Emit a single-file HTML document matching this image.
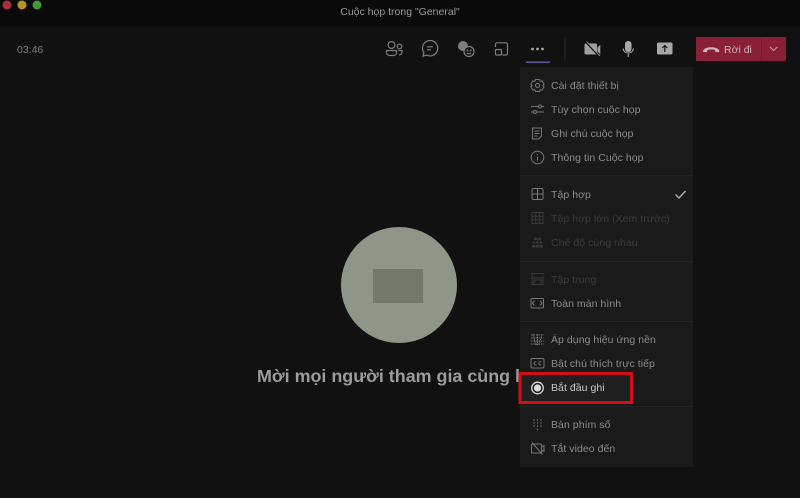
<!DOCTYPE html>
<html><head><meta charset="utf-8">
<style>
html,body{margin:0;padding:0;background:#111112;}
#r{position:relative;width:800px;height:498px;overflow:hidden;background:#111112;font-family:"Liberation Sans","Noto Sans CJK JP",sans-serif;filter:blur(.3px);}
.t{position:absolute;white-space:nowrap;}
.i{position:absolute;white-space:nowrap;left:551px;font-size:10.5px;line-height:14px;color:#8c8c8c;letter-spacing:.05px;}
.d{color:#3c3c3c;}
.s{position:absolute;left:520px;width:173px;height:1px;background:#242424;}
svg{position:absolute;left:0;top:0;}
</style></head><body>
<div id="r">
<div style="position:absolute;left:0;top:0;width:800px;height:26px;background:#0a0a0a;"></div>
<div class="t" style="left:0;width:800px;top:5px;text-align:center;font-size:10.5px;line-height:14px;color:#9a9a9a;">Cuộc họp trong "General"</div>
<div class="t" style="left:17px;top:43px;font-size:10.5px;line-height:14px;color:#7d7d7d;">03:46</div>

<div style="position:absolute;left:341px;top:227px;width:116px;height:116px;border-radius:50%;background:#8f9587;"></div>
<div style="position:absolute;left:373px;top:269px;width:50px;height:34px;background:#74796c;"></div>
<div class="t" style="left:257px;top:364px;font-size:17.9px;line-height:24px;font-weight:bold;color:#9c9c9c;">Mời mọi người tham gia cùng bạn</div>

<div style="position:absolute;left:520px;top:67px;width:173px;height:400px;background:#1a1a1a;"></div>
<div style="position:absolute;left:520px;top:374px;width:111px;height:28px;background:#202020;"></div>
<div class="s" style="top:175px"></div>
<div class="s" style="top:261px"></div>
<div class="s" style="top:321px"></div>
<div class="s" style="top:406px"></div>

<div style="position:absolute;left:696px;top:37px;width:90px;height:24px;background:#8a1f38;border-radius:1px;"></div>
<div style="position:absolute;left:761px;top:37px;width:1px;height:24px;background:#701a2e;"></div>
<div class="t" style="left:724px;top:43px;font-size:10.5px;line-height:14px;color:#c9b5ba;">Rời đi</div>

<svg width="800" height="498" viewBox="0 0 800 498" fill="none">
<circle cx="7" cy="5" r="4.5" fill="#a8323a"/><circle cx="22" cy="5" r="4.5" fill="#b8902c"/><circle cx="37" cy="5" r="4.5" fill="#3f9a3c"/>

<g stroke="#7e7e7e" stroke-width="1.2">
<!-- people -->
<circle cx="391.500" cy="45" r="3.400"/><circle cx="399.500" cy="46.500" r="2.300"/>
<path d="M386.500 50.500h10v2a3 3 0 0 1-3 3h-4a3 3 0 0 1-3-3z"/><path d="M398.500 50.500h3.500v1.500a3 3 0 0 1-3 3"/>
<!-- chat -->
<path d="M430 40.500a7.700 7.700 0 1 1-3.400 14.600l-3.600 1 .9-3.500a7.700 7.700 0 0 1 6.100-12.100z"/><path d="M427 46.800h6M427 49.800h4"/>
<!-- reactions -->
<circle cx="463" cy="46" r="5" fill="#7e7e7e" stroke="none"/>
<circle cx="469" cy="51.500" r="5" fill="#111112"/><circle cx="467.300" cy="50.500" r=".4"/><circle cx="470.700" cy="50.500" r=".4"/><path d="M467 53q2 1.500 4 0"/>
<!-- rooms -->
<path d="M495.500 47v-2.700a1.500 1.500 0 0 1 1.500-1.500h9a1.500 1.500 0 0 1 1.500 1.500v9.200a1.500 1.500 0 0 1-1.500 1.500h-3.500"/>
<rect x="495.500" y="49.500" width="6" height="5.500" rx="1"/>
</g>
<circle cx="532.500" cy="49" r="1.400" fill="#a5a5a5"/><circle cx="537.500" cy="49" r="1.400" fill="#a5a5a5"/><circle cx="542.500" cy="49" r="1.400" fill="#a5a5a5"/>
<rect x="526" y="61.500" width="24" height="1.500" fill="#5c5a96"/>
<rect x="564.500" y="37" width="1" height="24" fill="#2b2b2b"/>

<!-- camera off -->
<path d="M586 43.500h9.500a1.500 1.500 0 0 1 1.500 1.500v8a1.500 1.500 0 0 1-1.500 1.500h-9.500a1.500 1.500 0 0 1-1.500-1.500v-8a1.500 1.500 0 0 1 1.500-1.500z" fill="#a0a0a0"/>
<path d="M597.500 47.500l2.500-2.500h.3v9h-.3l-2.500-2.500z" fill="#a0a0a0"/>
<path d="M585.500 41.500l14 15" stroke="#111112" stroke-width="1.800"/>
<path d="M586.500 41.500l13.500 14.500" stroke="#a0a0a0" stroke-width=".9"/>
<!-- mic -->
<rect x="625" y="41" width="6.500" height="11" rx="3.200" fill="#a8a8a8"/>
<path d="M623 48.500a5.300 5.300 0 0 0 10.500 0M628.200 54v3" stroke="#a8a8a8" stroke-width="1.100"/>
<!-- share -->
<rect x="657" y="42.500" width="15.500" height="12" rx="1.500" fill="#a8a8a8"/>
<path d="M664.800 52v-6M662.300 48l2.500-2.500 2.500 2.500" stroke="#151515" stroke-width="1.200"/>
<!-- hang up -->
<path d="M703.500 50c2.500-3.600 12.500-3.600 15.500 0 .6.700.4 1.700-.4 2.100h-3l-.8-2.200c-2-.6-5.200-.6-7.200 0l-.8 2.200h-3.100c-.8-.4-1-1.400-.2-2.100z" fill="#cbb4ba"/>
<path d="M770 47l3.700 3.500 3.700-3.500" stroke="#c39fa9" stroke-width="1.100"/>

<g stroke="#777" stroke-width="1">
<!-- settings -->
<circle cx="537.500" cy="85.500" r="2"/>
<path d="M535.500 79.500h4l.7 1.800 1.900-.4 2 3.200-1.200 1.400 1.200 1.400-2 3.200-1.900-.4-.7 1.800h-4l-.7-1.800-1.900.4-2-3.200 1.200-1.400-1.200-1.400 2-3.200 1.900.4z"/>
<!-- sliders -->
<path d="M531 106.500h7.500M542 106.500h2M531 112h2M536.500 112h7.500"/><circle cx="540" cy="106.500" r="1.500"/><circle cx="535" cy="112" r="1.500"/>
<!-- notes -->
<path d="M532.500 128h9v8l-3 3h-6z"/><path d="M534.500 131h5M534.500 133.500h5M534.500 136h3"/>
<!-- info -->
<circle cx="537.500" cy="157.500" r="6.300"/><path d="M537.500 156.500v4M537.500 154v1"/>
<!-- gallery -->
<rect x="532" y="188.500" width="11" height="11" rx="1.500"/><path d="M537.500 188.500v11M532 194h11"/>
<!-- fullscreen -->
<rect x="531" y="298.500" width="12.500" height="9.500" rx="1"/><path d="M534.500 300.800l-2 2.400 2 2.400M540 300.800l2 2.400-2 2.400"/>
<!-- background -->
<g stroke-dasharray="1.500 1">
<path d="M531 335l13 0M531 338l13 0M531 341l13 0M531 344l13 0M533 334l3 11M537.500 334v11M542 334l-3 11" stroke-width="1"/>
</g>
<!-- cc -->
<rect x="531" y="358.500" width="13" height="9.500" rx="1.500"/>
<path d="M536.500 361.800a1.700 1.700 0 1 0 0 3M541.200 361.800a1.700 1.700 0 1 0 0 3" stroke-width=".9"/>
</g>
<g stroke="#3a3a3a" stroke-width="1">
<rect x="532" y="212.500" width="11" height="11"/><path d="M535.700 212.500v11M539.300 212.500v11M532 216.200h11M532 219.800h11"/>
<rect x="532" y="273.500" width="11" height="11"/><path d="M532 278h11M534 284v-4h7v4"/>
</g>
<g fill="#3a3a3a">
<circle cx="535" cy="239" r="1.200"/><circle cx="537.500" cy="239" r="1.200"/><circle cx="540" cy="239" r="1.200"/>
<circle cx="534" cy="242.500" r="1.300"/><circle cx="537.500" cy="242.500" r="1.300"/><circle cx="541" cy="242.500" r="1.300"/>
<rect x="532" y="245" width="3.500" height="2.500"/><rect x="536" y="245" width="3" height="2.500"/><rect x="539.500" y="245" width="3.500" height="2.500"/>
</g>
<g fill="#777">
<circle cx="534" cy="420" r=".7"/><circle cx="537.500" cy="420" r=".7"/><circle cx="541" cy="420" r=".7"/>
<circle cx="534" cy="423" r=".7"/><circle cx="537.500" cy="423" r=".7"/><circle cx="541" cy="423" r=".7"/>
<circle cx="534" cy="426" r=".7"/><circle cx="537.500" cy="426" r=".7"/><circle cx="541" cy="426" r=".7"/>
<circle cx="537.500" cy="429.500" r=".7"/>
</g>
<g stroke="#777" stroke-width="1">
<path d="M533 444h7.500a1 1 0 0 1 1 1v7a1 1 0 0 1-1 1h-8a1 1 0 0 1-1-1v-7.500z"/><path d="M541.500 447l2.500-1.500v6l-2.500-1.500M532 442.500l10.500 12"/>
</g>
<!-- record -->
<circle cx="537.500" cy="388" r="5.800" stroke="#d8d8d8" stroke-width="1.300"/><circle cx="537.500" cy="388" r="3.600" fill="#dcdcdc"/>
<!-- check -->
<path d="M675.500 194.500l3.500 3.500 6.500-7" stroke="#b0b0b0" stroke-width="1.400"/>
<rect x="520" y="373.500" width="111.500" height="29" stroke="#cf1018" stroke-width="3"/>
</svg>

<div class="i" style="top:79px">Cài đặt thiết bị</div>
<div class="i" style="top:103px">Tùy chọn cuộc họp</div>
<div class="i" style="top:127px">Ghi chú cuộc họp</div>
<div class="i" style="top:151px">Thông tin Cuộc họp</div>
<div class="i" style="top:188px">Tập hợp</div>
<div class="i d" style="top:212px">Tập hợp lớn (Xem trước)</div>
<div class="i d" style="top:236px">Chế độ cùng nhau</div>
<div class="i d" style="top:273px">Tập trung</div>
<div class="i" style="top:297px">Toàn màn hình</div>
<div class="i" style="top:333px">Áp dụng hiệu ứng nền</div>
<div class="i" style="top:357px">Bật chú thích trực tiếp</div>
<div class="i" style="top:381px;color:#c8c8c8">Bắt đầu ghi</div>
<div class="i" style="top:418px">Bàn phím số</div>
<div class="i" style="top:442px">Tắt video đến</div>
</div>
</body></html>
